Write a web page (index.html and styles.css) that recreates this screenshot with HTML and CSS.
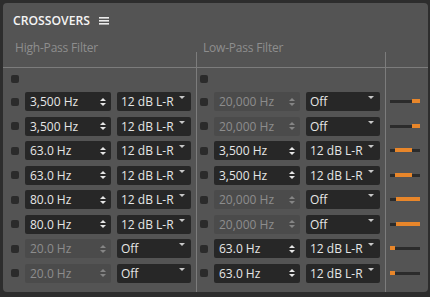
FILE: index.html
```html
<!DOCTYPE html>
<html lang="en">
<head>
    <meta charset="UTF-8">
    <meta name="viewport" content="width=device-width, initial-scale=1.0">
    <title>Crossovers</title>
    <link rel="stylesheet" href="styles.css">
</head>
<body>
    <div class="panel">
        <div class="title">
            <span>CROSSOVERS</span>
            <svg class="menu" width="10" height="8" viewBox="0 0 10 8">
                <rect x="0" y="0" width="10" height="1.6"/>
                <rect x="0" y="3" width="10" height="1.6"/>
                <rect x="0" y="6" width="10" height="1.6"/>
            </svg>
        </div>
        <div class="labels">
            <span class="label label-hp">High-Pass Filter</span>
            <span class="label label-lp">Low-Pass Filter</span>
        </div>
        <div class="grid">
            <!-- High-pass column -->
            <div class="col col-hp">
                <div class="col-head"></div>
                <div class="row first"><span class="check"></span></div>
                <div class="row"><span class="check"></span><div class="spin"><span>3,500 Hz</span><svg class="arrows" width="6" height="8"><polygon points="0,3 3,0 6,3"/><polygon points="0,5 3,8 6,5"/></svg></div><div class="drop"><span>12 dB L-R</span><svg class="caret" width="6" height="3"><polygon points="0,0 6,0 3,3"/></svg></div></div>
                <div class="row"><span class="check"></span><div class="spin"><span>3,500 Hz</span><svg class="arrows" width="6" height="8"><polygon points="0,3 3,0 6,3"/><polygon points="0,5 3,8 6,5"/></svg></div><div class="drop"><span>12 dB L-R</span><svg class="caret" width="6" height="3"><polygon points="0,0 6,0 3,3"/></svg></div></div>
                <div class="row"><span class="check"></span><div class="spin"><span>63.0 Hz</span><svg class="arrows" width="6" height="8"><polygon points="0,3 3,0 6,3"/><polygon points="0,5 3,8 6,5"/></svg></div><div class="drop"><span>12 dB L-R</span><svg class="caret" width="6" height="3"><polygon points="0,0 6,0 3,3"/></svg></div></div>
                <div class="row"><span class="check"></span><div class="spin"><span>63.0 Hz</span><svg class="arrows" width="6" height="8"><polygon points="0,3 3,0 6,3"/><polygon points="0,5 3,8 6,5"/></svg></div><div class="drop"><span>12 dB L-R</span><svg class="caret" width="6" height="3"><polygon points="0,0 6,0 3,3"/></svg></div></div>
                <div class="row"><span class="check"></span><div class="spin"><span>80.0 Hz</span><svg class="arrows" width="6" height="8"><polygon points="0,3 3,0 6,3"/><polygon points="0,5 3,8 6,5"/></svg></div><div class="drop"><span>12 dB L-R</span><svg class="caret" width="6" height="3"><polygon points="0,0 6,0 3,3"/></svg></div></div>
                <div class="row"><span class="check"></span><div class="spin"><span>80.0 Hz</span><svg class="arrows" width="6" height="8"><polygon points="0,3 3,0 6,3"/><polygon points="0,5 3,8 6,5"/></svg></div><div class="drop"><span>12 dB L-R</span><svg class="caret" width="6" height="3"><polygon points="0,0 6,0 3,3"/></svg></div></div>
                <div class="row"><span class="check"></span><div class="spin disabled"><span>20.0 Hz</span><svg class="arrows" width="6" height="8"><polygon points="0,3 3,0 6,3"/><polygon points="0,5 3,8 6,5"/></svg></div><div class="drop"><span>Off</span><svg class="caret" width="6" height="3"><polygon points="0,0 6,0 3,3"/></svg></div></div>
                <div class="row"><span class="check"></span><div class="spin disabled"><span>20.0 Hz</span><svg class="arrows" width="6" height="8"><polygon points="0,3 3,0 6,3"/><polygon points="0,5 3,8 6,5"/></svg></div><div class="drop"><span>Off</span><svg class="caret" width="6" height="3"><polygon points="0,0 6,0 3,3"/></svg></div></div>
            </div>

            <!-- Low-pass column -->
            <div class="col col-lp">
                <div class="col-head"></div>
                <div class="row first"><span class="check"></span></div>
                <div class="row"><span class="check"></span><div class="spin disabled"><span>20,000 Hz</span><svg class="arrows" width="6" height="8"><polygon points="0,3 3,0 6,3"/><polygon points="0,5 3,8 6,5"/></svg></div><div class="drop"><span>Off</span><svg class="caret" width="6" height="3"><polygon points="0,0 6,0 3,3"/></svg></div></div>
                <div class="row"><span class="check"></span><div class="spin disabled"><span>20,000 Hz</span><svg class="arrows" width="6" height="8"><polygon points="0,3 3,0 6,3"/><polygon points="0,5 3,8 6,5"/></svg></div><div class="drop"><span>Off</span><svg class="caret" width="6" height="3"><polygon points="0,0 6,0 3,3"/></svg></div></div>
                <div class="row"><span class="check"></span><div class="spin"><span>3,500 Hz</span><svg class="arrows" width="6" height="8"><polygon points="0,3 3,0 6,3"/><polygon points="0,5 3,8 6,5"/></svg></div><div class="drop"><span>12 dB L-R</span><svg class="caret" width="6" height="3"><polygon points="0,0 6,0 3,3"/></svg></div></div>
                <div class="row"><span class="check"></span><div class="spin"><span>3,500 Hz</span><svg class="arrows" width="6" height="8"><polygon points="0,3 3,0 6,3"/><polygon points="0,5 3,8 6,5"/></svg></div><div class="drop"><span>12 dB L-R</span><svg class="caret" width="6" height="3"><polygon points="0,0 6,0 3,3"/></svg></div></div>
                <div class="row"><span class="check"></span><div class="spin disabled"><span>20,000 Hz</span><svg class="arrows" width="6" height="8"><polygon points="0,3 3,0 6,3"/><polygon points="0,5 3,8 6,5"/></svg></div><div class="drop"><span>Off</span><svg class="caret" width="6" height="3"><polygon points="0,0 6,0 3,3"/></svg></div></div>
                <div class="row"><span class="check"></span><div class="spin disabled"><span>20,000 Hz</span><svg class="arrows" width="6" height="8"><polygon points="0,3 3,0 6,3"/><polygon points="0,5 3,8 6,5"/></svg></div><div class="drop"><span>Off</span><svg class="caret" width="6" height="3"><polygon points="0,0 6,0 3,3"/></svg></div></div>
                <div class="row"><span class="check"></span><div class="spin"><span>63.0 Hz</span><svg class="arrows" width="6" height="8"><polygon points="0,3 3,0 6,3"/><polygon points="0,5 3,8 6,5"/></svg></div><div class="drop"><span>12 dB L-R</span><svg class="caret" width="6" height="3"><polygon points="0,0 6,0 3,3"/></svg></div></div>
                <div class="row"><span class="check"></span><div class="spin"><span>63.0 Hz</span><svg class="arrows" width="6" height="8"><polygon points="0,3 3,0 6,3"/><polygon points="0,5 3,8 6,5"/></svg></div><div class="drop"><span>12 dB L-R</span><svg class="caret" width="6" height="3"><polygon points="0,0 6,0 3,3"/></svg></div></div>
            </div>

            <!-- Range preview column -->
            <div class="col col-range">
                <div class="col-head"></div>
                <div class="row first"></div>
                <div class="row"><div class="track"><div class="fill" style="left: 22px; width: 8px;"></div></div></div>
                <div class="row"><div class="track"><div class="fill" style="left: 22px; width: 8px;"></div></div></div>
                <div class="row"><div class="track"><div class="fill" style="left: 5px; width: 17px;"></div></div></div>
                <div class="row"><div class="track"><div class="fill" style="left: 5px; width: 17px;"></div></div></div>
                <div class="row"><div class="track"><div class="fill" style="left: 6px; width: 24px;"></div></div></div>
                <div class="row"><div class="track"><div class="fill" style="left: 6px; width: 24px;"></div></div></div>
                <div class="row"><div class="track"><div class="fill" style="left: 0; width: 5px;"></div></div></div>
                <div class="row"><div class="track"><div class="fill" style="left: 0; width: 5px;"></div></div></div>
            </div>
        </div>
    </div>
</body>
</html>
```

FILE: styles.css
```css
/* General */
body {
    margin: 0;
    padding: 3px 2px 0 3px;
    background: #2d2d2d;
    font-family: "Open Sans", "Noto Sans", sans-serif;
    font-size: 12px;
    color: #e6e6e6;
}

.panel {
    width: 425px;
    height: 289px;
    background: #545454;
    border-radius: 4px;
    display: flex;
    flex-direction: column;
    overflow: hidden;
}

/* Title bar */
.title {
    display: flex;
    align-items: center;
    padding: 10px 10px 0;
    height: 16px;
    line-height: 16px;
    font-size: 12.2px;
    font-weight: 600;
    color: #f4f4f4;
}

.menu {
    margin-left: 9px;
    fill: #ececec;
}

/* Column labels */
.labels {
    display: flex;
    margin-top: 10px;
    height: 13px;
    line-height: 18px;
    letter-spacing: -0.2px;
    color: #8e8e8e;
}

.label-hp {
    margin-left: 12px;
    width: 188px;
}

/* Grid */
.grid {
    flex: 1;
    display: flex;
}

.col {
    display: flex;
    flex-direction: column;
}

.col-hp {
    width: 193px;
}

.col-lp {
    width: 188px;
    border-left: 1px solid #7c7c7c;
}

.col-range {
    flex: 1;
    border-left: 1px solid #7c7c7c;
}

.col-head {
    height: 15px;
    border-bottom: 1px solid #7c7c7c;
}

.row {
    display: flex;
    align-items: center;
    height: 19px;
    margin-top: 5.57px;
}

.row.first {
    margin-top: 1px;
}

.row.first + .row {
    margin-top: 4px;
}

.col-hp .row {
    padding-left: 8px;
}

.col-lp .row {
    padding-left: 3px;
}

.col-range .row {
    padding-left: 4px;
}

.check {
    width: 8px;
    height: 8px;
    border-radius: 2px;
    background: #2b2b2b;
    margin-right: 6px;
}

/* Spin box */
.spin {
    width: 86px;
    height: 19px;
    box-sizing: border-box;
    padding: 0 5px 0 5px;
    display: flex;
    align-items: center;
    justify-content: space-between;
    background: #272727;
    border-radius: 2px;
    line-height: 19px;
    margin-right: 6px;
}

.spin .arrows {
    fill: #e6e6e6;
}

.spin.disabled {
    background: #4b4b4b;
    color: #8d8d8d;
}

.spin.disabled .arrows {
    fill: #858585;
}

/* Dropdown */
.drop {
    position: relative;
    width: 74px;
    height: 19px;
    box-sizing: border-box;
    padding-left: 4px;
    background: #272727;
    border-radius: 2px;
    line-height: 19px;
}

.caret {
    position: absolute;
    top: 4px;
    right: 6px;
    fill: #c8c8c8;
}

/* Range preview */
.track {
    position: relative;
    width: 30px;
    height: 3px;
    background: #2b2b2b;
}

.fill {
    position: absolute;
    top: -1px;
    height: 4px;
    background: #e8862a;
}
```
